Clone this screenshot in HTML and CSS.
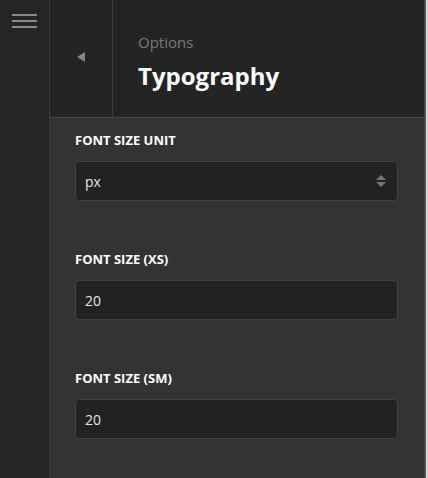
FILE: index.html
```html
<!DOCTYPE html>
<html lang="en">
<head>
    <meta charset="UTF-8">
    <meta name="viewport" content="width=device-width, initial-scale=1.0">
    <title>Typography</title>
    <link rel="stylesheet" href="styles.css">
</head>
<body>
    <div class="app">
        <!-- 左侧菜单栏 -->
        <aside class="sidebar">
            <button class="menu-toggle" aria-label="Menu">
                <span></span><span></span><span></span>
            </button>
        </aside>

        <!-- 设置面板 -->
        <main class="panel">
            <header class="panel-header">
                <button class="back-button" aria-label="Back"></button>
                <div class="panel-titles">
                    <div class="panel-subtitle">Options</div>
                    <h1>Typography</h1>
                </div>
            </header>

            <form class="panel-body">
                <div class="form-group">
                    <label for="unit">Font Size Unit</label>
                    <div class="select-wrap">
                        <select id="unit" name="unit">
                            <option>px</option>
                            <option>rem</option>
                            <option>em</option>
                        </select>
                    </div>
                </div>
                <div class="form-group">
                    <label for="sizeXs">Font Size (XS)</label>
                    <input type="text" id="sizeXs" name="sizeXs" value="20">
                </div>
                <div class="form-group">
                    <label for="sizeSm">Font Size (SM)</label>
                    <input type="text" id="sizeSm" name="sizeSm" value="20">
                </div>
            </form>
        </main>
        <div class="scroll-edge"></div>
    </div>
</body>
</html>
```

FILE: styles.css
```css
:root {
    --sidebar-bg: #252525;
    --header-bg: #242424;
    --panel-bg: #333333;
    --field-bg: #222222;
    --line-color: #3c3c3c;
    --muted: #7a7a7a;
    --text-color: #e6e6e6;
}

* {
    margin: 0;
    padding: 0;
    box-sizing: border-box;
    font-family: "Open Sans", "Noto Sans", sans-serif;
}

body {
    background: #d9d9d9;
    height: 100vh;
    overflow: hidden;
}

.app {
    display: flex;
    height: 100%;
}

.sidebar {
    width: 50px;
    flex-shrink: 0;
    background: var(--sidebar-bg);
    border-right: 1px solid var(--line-color);
}

.menu-toggle {
    display: flex;
    flex-direction: column;
    gap: 4px;
    padding: 14px 12px;
    background: none;
    border: none;
    cursor: pointer;
}

.menu-toggle span {
    display: block;
    width: 25px;
    height: 2px;
    background: #8a8a8a;
}

.panel {
    width: 375px;
    flex-shrink: 0;
    background: var(--panel-bg);
    border-right: 1px solid #444;
}

.panel-header {
    display: flex;
    height: 118px;
    background: var(--header-bg);
    border-bottom: 1px solid #484848;
}

.back-button {
    width: 63px;
    flex-shrink: 0;
    background: none;
    border: none;
    border-right: 1px solid var(--line-color);
    position: relative;
    cursor: pointer;
}

.back-button::before {
    content: '';
    position: absolute;
    left: 27px;
    top: 52px;
    border-top: 5px solid transparent;
    border-bottom: 5px solid transparent;
    border-right: 8px solid #858585;
}

.panel-titles {
    padding: 32px 0 0 25px;
}

.panel-subtitle {
    font-size: 15px;
    color: var(--muted);
    line-height: 20px;
}

.panel-titles h1 {
    font-size: 24px;
    font-weight: 700;
    color: #ffffff;
    line-height: 30px;
    margin-top: 9px;
}

.panel-body {
    padding: 14px 26px 0 25px;
}

.form-group {
    margin-bottom: 50px;
}

.form-group label {
    display: block;
    font-size: 13px;
    font-weight: 700;
    line-height: 16px;
    text-transform: uppercase;
    color: #ffffff;
    margin-bottom: 13px;
}

.form-group input,
.form-group select {
    width: 100%;
    height: 40px;
    background: var(--field-bg);
    border: 1px solid #444;
    border-radius: 4px;
    padding: 0 9px;
    color: var(--text-color);
    font-size: 14px;
    outline: none;
    appearance: none;
}

.select-wrap {
    position: relative;
}

/* 上下箭头 */
.select-wrap::before,
.select-wrap::after {
    content: '';
    position: absolute;
    right: 12px;
    border-left: 5px solid transparent;
    border-right: 5px solid transparent;
    pointer-events: none;
}

.select-wrap::before {
    top: 14px;
    border-bottom: 5px solid #777;
}

.select-wrap::after {
    top: 21px;
    border-top: 5px solid #777;
}

.scroll-edge {
    flex: 1;
    border-left: 1px solid #555;
    background: #d9d9d9;
}
```
